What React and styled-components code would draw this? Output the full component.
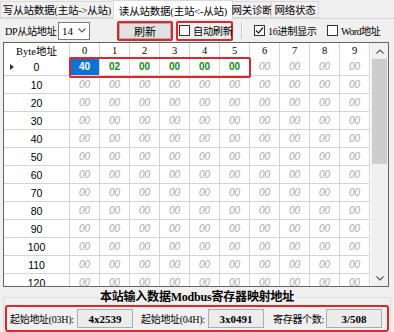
import React from "react";
import styled, { createGlobalStyle } from "styled-components";

const Global = createGlobalStyle`
  html, body { margin: 0; padding: 0; background: #f0f0f0; }
  body { width: 394px; height: 332px; overflow: hidden;
    font-family: "Liberation Sans", "Noto Sans CJK SC", sans-serif; font-size: 11px; color: #000; }
  * { box-sizing: border-box; }
`;

const CJK = `"Liberation Serif", "Noto Sans CJK SC", serif`;

const Window = styled.div`
  width: 394px; height: 332px; display: flex; flex-direction: column; background: #f0f0f0;
`;

const TabBar = styled.div`
  display: flex; align-items: flex-end; height: 19px; flex: none;
  border-bottom: 1px solid #d9d9d9;
`;

const Tab = styled.div`
  width: ${p => p.$w}px; height: ${p => (p.$active ? 19 : 17)}px;
  margin-bottom: ${p => (p.$active ? -1 : 0)}px;
  display: flex; align-items: center; justify-content: center;
  font-family: ${CJK}; font-size: 10.5px; white-space: nowrap; letter-spacing: -0.2px;
  background: ${p => (p.$active ? "#ffffff" : "#f0f0f0")};
  border: 1px solid #d9d9d9; border-bottom: ${p => (p.$active ? "none" : "1px solid #d9d9d9")};
  margin-left: -1px;
  &:first-child { margin-left: 0; }
`;

const Toolbar = styled.div`
  height: 23px; flex: none; display: flex; align-items: center; padding-left: 5px;
`;

const Label = styled.span`
  font-family: ${CJK}; font-size: 10.2px; white-space: nowrap; letter-spacing: ${p => p.$ls ?? -0.3}px;
  width: ${p => (p.$w ? `${p.$w}px` : "auto")}; flex: none; overflow: visible;
`;

const Select = styled.div`
  width: 32px; height: 18px; margin-left: 5px; background: #fff; border: 1px solid #7a7a7a;
  display: flex; align-items: center; justify-content: space-between; padding: 0 3px 0 3px;
  font-family: "Liberation Serif", serif; font-size: 11px; flex: none;
`;

const RefreshBtn = styled.div`
  width: 56px; height: 20px; margin-left: 27px; border: 2px solid #e0262a; border-radius: 2px;
  background: #e1e1e1; display: flex; align-items: center; justify-content: center;
  box-shadow: inset 0 0 0 1px #adadad; flex: none;
  font-family: ${CJK}; font-size: 11px;
`;

const CheckWrap = styled.div`
  display: flex; align-items: center; gap: 3px; height: 20px; flex: none; overflow: visible;
  margin-left: ${p => p.$ml}px; padding: 0 1px;
  border: ${p => (p.$hl ? "2px solid #e0262a" : "2px solid transparent")}; border-radius: 2px;
  width: ${p => p.$w}px;
`;

const Box = styled.div`
  width: 11px; height: 11px; border: 1px solid #333; background: #fff;
  display: flex; align-items: center; justify-content: center; flex: none;
`;

const Sep = styled.div`
  width: 2px; height: 17px; background: #c8c8c8; margin-left: 8px; border-right: 1px solid #fff; flex: none;
`;

const GridFrame = styled.div`
  position: relative; margin: 0 5px 0 3px; height: 245px; flex: none; border: 1px solid #646464;
  background: #ffffff; display: flex; overflow: hidden;
`;

const GridArea = styled.div`
  width: 366px; overflow: hidden; display: flex; flex-direction: column;
`;

const Row = styled.div`
  display: grid; grid-template-columns: 66px repeat(10, 30px); height: ${p => p.$h}px; flex: none;
`;

const HeadCell = styled.div`
  border-right: 1px solid #d4d4d4; border-bottom: 1px solid #d4d4d4;
  display: flex; align-items: center; justify-content: center;
  font-family: ${CJK}; font-size: 10.5px; background: #fff;
`;

const RowHead = styled.div`
  position: relative; border-right: 1px solid #d4d4d4; border-bottom: 1px solid #d4d4d4;
  display: flex; align-items: center; justify-content: center;
  font-family: "Liberation Sans", sans-serif; font-size: 10.5px; background: #fff;
`;

const Arrow = styled.span`
  position: absolute; left: 6px; top: 50%; transform: translateY(-50%);
  width: 0; height: 0; border-top: 3.5px solid transparent; border-bottom: 3.5px solid transparent;
  border-left: 4px solid #333;
`;

const Cell = styled.div`
  border-right: 1px solid #d4d4d4; border-bottom: 1px solid #d4d4d4;
  display: flex; align-items: center; justify-content: center;
  font-family: "Liberation Sans", sans-serif; font-size: 10px;
  background: ${p => (p.$sel ? "#0a74d6" : "#fff")};
  color: ${p => (p.$sel ? "#fff" : p.$val ? "#118a11" : "#a8a8a8")};
  font-style: ${p => (p.$val || p.$sel ? "normal" : "italic")};
  font-weight: ${p => (p.$val || p.$sel ? "bold" : "normal")};
`;

const Highlight = styled.div`
  position: absolute; left: 65px; top: 14px; width: 182px; height: 21px;
  border: 2px solid #e0262a; border-radius: 2px; pointer-events: none;
`;

const Scrollbar = styled.div`
  width: 17px; background: #f0f0f0; display: flex; flex-direction: column; margin-left: 1px;
`;

const ScrollBtn = styled.div`
  height: 16px; display: flex; align-items: center; justify-content: center; flex: none;
`;

const Track = styled.div`
  flex: 1; position: relative;
`;

const Thumb = styled.div`
  position: absolute; left: 1px; right: 1px; top: 0; height: 105px; background: #cdcdcd;
`;

const Group = styled.fieldset`
  margin: 4px 3px 0 3px; padding: 1px 1px 2px 1px; border: 1px solid #dcdcdc; border-bottom: none;
  flex: 1; min-width: 0;
`;

const Legend = styled.legend`
  margin: 0 auto; padding: 0 2px; font-family: ${CJK}; font-weight: bold; font-size: 12px;
  line-height: 12px; letter-spacing: -0.2px;
`;

const InfoBar = styled.div`
  height: 27px; border: 2px solid #e0262a; border-radius: 3px; display: flex; align-items: center;
  padding-left: 3px; margin-top: 1px;
`;

const InfoLabel = styled.span`
  font-family: ${CJK}; font-size: 10px; white-space: nowrap; margin-left: ${p => p.$ml}px;
  width: ${p => p.$w}px; flex: none; letter-spacing: -0.3px;
`;

const Field = styled.div`
  width: 56px; height: 19px; margin-left: 3px; border: 1px solid #adadad; flex: none;
  background: #ececec; display: flex; align-items: center; justify-content: center;
  font-family: "Liberation Serif", serif; font-weight: bold; font-size: 11px;
`;

const Check = () => (
  <svg width="9" height="9" viewBox="0 0 9 9">
    <path d="M1 4.5 L3.5 7 L8 1.5" fill="none" stroke="#222" strokeWidth="1.2" />
  </svg>
);

const Chevron = ({ up, color = "#555" }) => (
  <svg width="8" height="5" viewBox="0 0 8 5">
    <path d={up ? "M0.5 4.5 L4 1 L7.5 4.5" : "M0.5 0.5 L4 4 L7.5 0.5"} fill="none" stroke={color} strokeWidth="1.1" />
  </svg>
);

const firstRow = ["40", "02", "00", "00", "00", "00"];
const rowLabels = [0, 10, 20, 30, 40, 50, 60, 70, 80, 90, 100, 110, 120];

export default function App() {
  return (
    <Window>
      <Global />
      <TabBar>
        <Tab $w={114}>写从站数据(主站-&gt;从站)</Tab>
        <Tab $w={120} $active>读从站数据(主站&lt;-从站)</Tab>
        <Tab $w={40}>网关诊断</Tab>
        <Tab $w={48}>网络状态</Tab>
      </TabBar>
      <Toolbar>
        <Label $w={48} $ls={-0.4}>DP从站地址</Label>
        <Select>
          <span>14</span>
          <Chevron />
        </Select>
        <RefreshBtn>刷新</RefreshBtn>
        <CheckWrap $ml={3} $hl $w={57}>
          <Box />
          <Label>自动刷新</Label>
        </CheckWrap>
        <Sep />
        <CheckWrap $ml={8} $w={72}>
          <Box><Check /></Box>
          <Label $ls={-0.4}>16进制显示</Label>
        </CheckWrap>
        <CheckWrap $ml={1} $w={60}>
          <Box />
          <Label $ls={-0.6}>Word地址</Label>
        </CheckWrap>
      </Toolbar>
      <GridFrame>
        <GridArea>
          <Row $h={15}>
            <HeadCell>Byte地址</HeadCell>
            {Array.from({ length: 10 }, (_, i) => (
              <HeadCell key={i}>{i}</HeadCell>
            ))}
          </Row>
          {rowLabels.map((r, ri) => (
            <Row $h={18} key={r}>
              <RowHead>
                {ri === 0 && <Arrow />}
                {r}
              </RowHead>
              {Array.from({ length: 10 }, (_, c) => {
                if (ri === 0 && c < 6) {
                  return (
                    <Cell key={c} $sel={c === 0} $val={c > 0}>
                      {firstRow[c]}
                    </Cell>
                  );
                }
                return <Cell key={c}>00</Cell>;
              })}
            </Row>
          ))}
        </GridArea>
        <Highlight />
        <Scrollbar>
          <ScrollBtn><Chevron up /></ScrollBtn>
          <Track><Thumb /></Track>
          <ScrollBtn><Chevron /></ScrollBtn>
        </Scrollbar>
      </GridFrame>
      <Group>
        <Legend>本站输入数据Modbus寄存器映射地址</Legend>
        <InfoBar>
          <InfoLabel $ml={0} $w={64}>起始地址(03H):</InfoLabel>
          <Field>4x2539</Field>
          <InfoLabel $ml={8} $w={64}>起始地址(04H):</InfoLabel>
          <Field>3x0491</Field>
          <InfoLabel $ml={9} $w={50}>寄存器个数:</InfoLabel>
          <Field>3/508</Field>
        </InfoBar>
      </Group>
    </Window>
  );
}
